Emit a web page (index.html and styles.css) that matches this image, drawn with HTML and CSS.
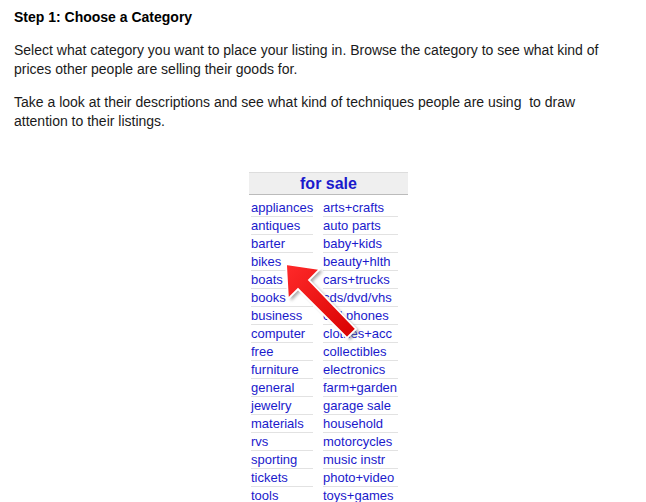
FILE: index.html
```html
<!DOCTYPE html>
<html lang="en">
<head>
  <meta charset="UTF-8">
  <title>Step 1: Choose a Category</title>
  <link rel="stylesheet" href="styles.css">
</head>
<body>
  <h1>Step 1: Choose a Category</h1>
  <p>Select what category you want to place your listing in. Browse the category to see what kind of prices other people are selling their goods for.</p>
  <p>Take a look at their descriptions and see what kind of techniques people are using&nbsp; to draw attention to their listings.</p>

  <div class="forsale">
    <h4>for sale</h4>
    <div class="cols">
      <ul>
        <li><a href="#">appliances</a></li>
        <li><a href="#">antiques</a></li>
        <li><a href="#">barter</a></li>
        <li><a href="#">bikes</a></li>
        <li><a href="#">boats</a></li>
        <li><a href="#">books</a></li>
        <li><a href="#">business</a></li>
        <li><a href="#">computer</a></li>
        <li><a href="#">free</a></li>
        <li><a href="#">furniture</a></li>
        <li><a href="#">general</a></li>
        <li><a href="#">jewelry</a></li>
        <li><a href="#">materials</a></li>
        <li><a href="#">rvs</a></li>
        <li><a href="#">sporting</a></li>
        <li><a href="#">tickets</a></li>
        <li><a href="#">tools</a></li>
      </ul>
      <ul class="right">
        <li><a href="#">arts+crafts</a></li>
        <li><a href="#">auto parts</a></li>
        <li><a href="#">baby+kids</a></li>
        <li><a href="#">beauty+hlth</a></li>
        <li><a href="#">cars+trucks</a></li>
        <li><a href="#">cds/dvd/vhs</a></li>
        <li><a href="#">cell phones</a></li>
        <li><a href="#">clothes+acc</a></li>
        <li><a href="#">collectibles</a></li>
        <li><a href="#">electronics</a></li>
        <li><a href="#">farm+garden</a></li>
        <li><a href="#">garage sale</a></li>
        <li><a href="#">household</a></li>
        <li><a href="#">motorcycles</a></li>
        <li><a href="#">music instr</a></li>
        <li><a href="#">photo+video</a></li>
        <li><a href="#">toys+games</a></li>
      </ul>
    </div>

    <!-- red pointer arrow -->
    <svg class="arrow" width="100" height="100" viewBox="0 0 100 100">
      <defs>
        <linearGradient id="red" x1="0" y1="0" x2="1" y2="1">
          <stop offset="0" stop-color="#ff2a2a"/>
          <stop offset="1" stop-color="#d80000"/>
        </linearGradient>
        <filter id="blur" x="-20%" y="-20%" width="140%" height="140%">
          <feGaussianBlur stdDeviation="1.5"/>
        </filter>
      </defs>
      <polygon transform="translate(3 2)" filter="url(#blur)" fill="#777" opacity="0.6"
        points="16,11 50,16 39,27 86,76 77,85 28,36 18,46"/>
      <polygon fill="url(#red)" stroke="#fff" stroke-width="1.8" stroke-linejoin="miter"
        points="16,11 50,16 39,27 86,76 77,85 28,36 18,46"/>
    </svg>
  </div>
</body>
</html>
```

FILE: styles.css
```css
body {
  margin: 0;
  padding: 8px 14px;
  font-family: "Liberation Sans", Arial, sans-serif;
  color: #1a1a1a;
  background: #fff;
}
h1 {
  font-size: 14px;
  font-weight: bold;
  margin: 1px 0 16px;
  color: #000;
}
p {
  font-size: 14px;
  line-height: 19px;
  margin: 0 0 14px;
  max-width: 614px;
}
.forsale {
  position: relative;
  width: 159px;
  margin: 41px 0 0 235px;
}
.forsale h4 {
  margin: 0;
  height: 21px;
  line-height: 21px;
  text-align: center;
  font-size: 16px;
  color: #1a1acc;
  background: #efefef;
  border-top: 1px solid #ddd;
  border-bottom: 1px solid #bbb;
}
.cols {
  display: flex;
  gap: 10px;
  padding: 4px 10px 0 2px;
}
.cols ul {
  list-style: none;
  margin: 0;
  padding: 0;
  width: 62px;
}
.cols ul.right {
  width: 75px;
}
.cols li {
  height: 17px;
  line-height: 18px;
  border-bottom: 1px solid #e2e2e2;
  font-size: 13px;
  white-space: nowrap;
}
.cols a {
  color: #1a1acc;
  text-decoration: none;
}
.arrow {
  position: absolute;
  left: 21px;
  top: 81px;
}
```
